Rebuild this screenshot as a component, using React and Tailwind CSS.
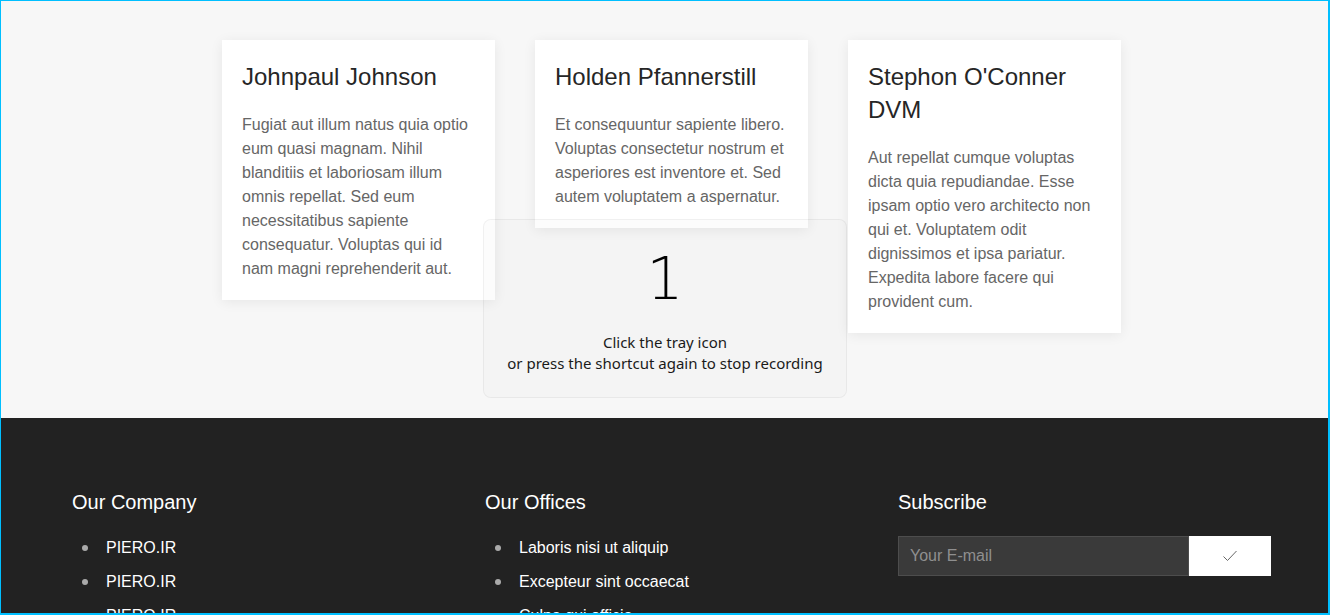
import React from "react";

const people = [
  {
    name: "Johnpaul Johnson",
    text: "Fugiat aut illum natus quia optio eum quasi magnam. Nihil blanditiis et laboriosam illum omnis repellat. Sed eum necessitatibus sapiente consequatur. Voluptas qui id nam magni reprehenderit aut.",
  },
  {
    name: "Holden Pfannerstill",
    text: "Et consequuntur sapiente libero. Voluptas consectetur nostrum et asperiores est inventore et. Sed autem voluptatem a aspernatur.",
  },
  {
    name: "Stephon O'Conner DVM",
    text: "Aut repellat cumque voluptas dicta quia repudiandae. Esse ipsam optio vero architecto non qui et. Voluptatem odit dignissimos et ipsa pariatur. Expedita labore facere qui provident cum.",
  },
];

const company = ["PIERO.IR", "PIERO.IR", "PIERO.IR"];
const offices = ["Laboris nisi ut aliquip", "Excepteur sint occaecat", "Culpa qui officia"];

function FooterList({ items }) {
  return (
    <ul className="mt-[24px] flex flex-col gap-[14px]">
      {items.map((item, i) => (
        <li key={i} className="flex items-center h-[20px] text-[16px] text-white">
          <span className="w-[6px] h-[6px] rounded-full bg-[#aaaaaa] ml-[10px] mr-[18px]" />
          {item}
        </li>
      ))}
    </ul>
  );
}

export default function App() {
  return (
    <div className="relative h-[615px] overflow-hidden border-l border-t border-r-2 border-b-2 border-[#00bfff] font-['Liberation_Sans',Arial,sans-serif]">
      {/* People cards */}
      <section className="bg-[#f7f7f7] h-[417px] pt-[39px] pl-[221px]">
        <div className="flex items-start gap-[40px]">
          {people.map((p) => (
            <div
              key={p.name}
              className="w-[273px] bg-white px-[20px] pt-[20px] pb-[19px] shadow-[0_2px_12px_rgba(0,0,0,0.07)]"
            >
              <h3 className="text-[24px] leading-[33px] text-[#262626]">{p.name}</h3>
              <p className="mt-[20px] text-[16px] leading-[24px] text-[#666666]">{p.text}</p>
            </div>
          ))}
        </div>
      </section>

      {/* Footer */}
      <footer className="bg-[#222222] pt-[72px] pl-[71px] h-[300px]">
        <div className="grid grid-cols-[373px_373px_373px] gap-[40px]">
          <div>
            <h4 className="text-[20px] leading-[24px] text-white">Our Company</h4>
            <FooterList items={company} />
          </div>
          <div>
            <h4 className="text-[20px] leading-[24px] text-white">Our Offices</h4>
            <FooterList items={offices} />
          </div>
          <div>
            <h4 className="text-[20px] leading-[24px] text-white">Subscribe</h4>
            <div className="mt-[22px] flex h-[40px]">
              <div className="flex-1 flex items-center bg-[#3a3a3a] border border-[#4d4d4d] pl-[11px] text-[16px] text-[#8f8f8f]">
                Your E-mail
              </div>
              <button className="w-[82px] bg-white flex items-center justify-center">
                <svg width="16" height="12" viewBox="0 0 16 12" fill="none">
                  <path d="M1.5 6.5 L5.5 10.5 L14.5 1" stroke="#666" strokeWidth="1" />
                </svg>
              </button>
            </div>
          </div>
        </div>
      </footer>

      {/* Recording overlay */}
      <div className="absolute left-[482px] top-[218px] w-[364px] h-[179px] rounded-[8px] border border-black/[0.05] bg-black/[0.012] flex flex-col items-center font-['Noto_Sans',sans-serif]">
        <div className="mt-[24px] text-[58px] leading-[70px] font-extralight text-black font-['DejaVu_Sans',sans-serif]">
          1
        </div>
        <div className="mt-[18px] text-[15px] leading-[21px] text-[#1a1a1a] text-center">
          Click the tray icon
          <br />
          or press the shortcut again to stop recording
        </div>
      </div>
    </div>
  );
}
